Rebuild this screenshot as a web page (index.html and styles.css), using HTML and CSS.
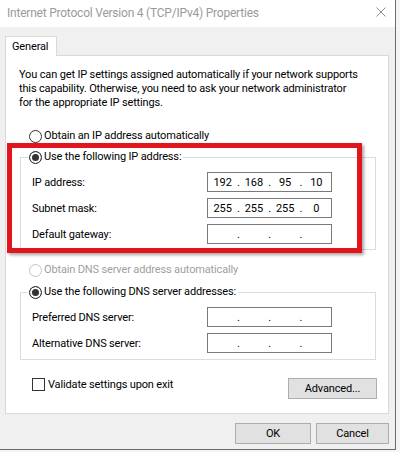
FILE: index.html
```html
<!DOCTYPE html>
<html>
<head>
<meta charset="utf-8">
<link rel="stylesheet" href="styles.css">
</head>
<body>
<div class="window">
  <div class="titlebar">
    <span class="title">Internet Protocol Version 4 (TCP/IPv4) Properties</span>
    <svg class="close" width="10" height="10" viewBox="0 0 10 10"><path d="M0.5 0.5L9.5 9.5M9.5 0.5L0.5 9.5" stroke="#8c8c8c" stroke-width="1" fill="none"/></svg>
  </div>
  <div class="client">
    <div class="tabs"><div class="tab">General</div></div>
    <div class="panel">
      <p class="intro">You can get IP settings assigned automatically if your network supports<br>this capability. Otherwise, you need to ask your network administrator<br>for the appropriate IP settings.</p>
      <div class="radio r-ipauto"><span class="rb"></span>Obtain an IP address automatically</div>
      <div class="group g-ip">
        <div class="legend"><span class="rb checked"></span>Use the following IP address:</div>
        <div class="rows">
          <div class="row"><span class="lbl">IP address:</span><div class="ipbox"><span class="seg">192</span><span class="dot">.</span><span class="seg">168</span><span class="dot">.</span><span class="seg">95</span><span class="dot">.</span><span class="seg">10</span></div></div>
          <div class="row"><span class="lbl">Subnet mask:</span><div class="ipbox"><span class="seg">255</span><span class="dot">.</span><span class="seg">255</span><span class="dot">.</span><span class="seg">255</span><span class="dot">.</span><span class="seg">0</span></div></div>
          <div class="row"><span class="lbl">Default gateway:</span><div class="ipbox"><span class="seg"></span><span class="dot">.</span><span class="seg"></span><span class="dot">.</span><span class="seg"></span><span class="dot">.</span><span class="seg"></span></div></div>
        </div>
      </div>
      <div class="radio disabled r-dnsauto"><span class="rb"></span>Obtain DNS server address automatically</div>
      <div class="group g-dns">
        <div class="legend"><span class="rb checked"></span>Use the following DNS server addresses:</div>
        <div class="rows">
          <div class="row"><span class="lbl">Preferred DNS server:</span><div class="ipbox"><span class="seg"></span><span class="dot">.</span><span class="seg"></span><span class="dot">.</span><span class="seg"></span><span class="dot">.</span><span class="seg"></span></div></div>
          <div class="row"><span class="lbl">Alternative DNS server:</span><div class="ipbox"><span class="seg"></span><span class="dot">.</span><span class="seg"></span><span class="dot">.</span><span class="seg"></span><span class="dot">.</span><span class="seg"></span></div></div>
        </div>
      </div>
      <div class="bottom-row">
        <div class="check"><span class="cb"></span>Validate settings upon exit</div>
        <div class="btn adv">Advanced...</div>
      </div>
    </div>
    <div class="actions">
      <div class="btn ok">OK</div>
      <div class="btn cancel">Cancel</div>
    </div>
  </div>
  <div class="highlight"></div>
</div>
</body>
</html>
```

FILE: styles.css
```css
* { box-sizing: border-box; }
html, body { margin: 0; padding: 0; }
body {
  background: #f4f4f4;
  width: 400px;
  height: 452px;
  overflow: hidden;
  font-family: Roboto, "Liberation Sans", sans-serif;
  font-size: 11px;
  letter-spacing: -0.15px;
  color: #000;
}
.window {
  position: relative;
  width: 396px;
  height: 450px;
  background: #f0f0f0;
  border-right: 1px solid #6d6d6d;
  border-bottom: 1px solid #6d6d6d;
}
.titlebar {
  height: 27px;
  background: #fff;
  display: flex;
  align-items: center;
  justify-content: space-between;
  padding: 0 9px 1px 7px;
}
.title {
  font-size: 12px;
  color: #9a9a9a;
  letter-spacing: -0.22px;
}
.close { display: block; margin-top: -2px; }
.client {
  padding: 9px 0 0 5px;
}
.tabs { display: flex; height: 19px; }
.tab {
  position: relative;
  z-index: 1;
  width: 52px;
  height: 20px;
  background: #fff;
  border: 1px solid #d9d9d9;
  border-bottom: none;
  padding: 2px 0 0 6px;
  line-height: 15px;
}
.panel {
  width: 384px;
  height: 359px;
  background: #fff;
  border: 1px solid #d9d9d9;
  display: flex;
  flex-direction: column;
}
.intro {
  margin: 0;
  padding: 12px 0 0 13px;
  line-height: 14px;
  white-space: nowrap;
}
.radio, .legend {
  display: flex;
  align-items: center;
  height: 16px;
  line-height: 16px;
  white-space: nowrap;
}
.r-ipauto { margin: 18px 0 0 23px; }
.r-dnsauto { margin: 12px 0 0 23px; }
.disabled { color: #a0a0a0; }
.rb {
  width: 13px;
  height: 13px;
  border-radius: 50%;
  border: 1px solid #333;
  background: #fff;
  margin-right: 2px;
  flex: none;
}
.disabled .rb { border-color: #c4c4c4; }
.rb.checked {
  background: #333;
  box-shadow: inset 0 0 0 2px #fff;
}
.group {
  margin-left: 14px;
  width: 356px;
  border: 1px solid #dcdcdc;
}
.g-ip { margin-top: 13px; padding-bottom: 5px; }
.g-dns { margin-top: 14px; padding-bottom: 6px; }
.legend {
  margin: -9px 0 0 7px;
  background: #fff;
  width: fit-content;
  padding: 0 2px 0 1px;
}
.rows {
  margin-top: 7px;
  display: flex;
  flex-direction: column;
  gap: 6px;
  padding-left: 11px;
}
.row {
  display: flex;
  align-items: center;
  height: 20px;
}
.lbl { width: 175px; flex: none; }
.ipbox {
  width: 125px;
  height: 20px;
  border: 1px solid #7a7a7a;
  display: flex;
  align-items: center;
  background: #fff;
}
.seg { flex: 1; text-align: center; }
.dot { width: 2px; display: flex; justify-content: center; }
.bottom-row {
  margin-top: 18px;
  display: flex;
  justify-content: space-between;
  align-items: flex-start;
  padding: 0 11px 0 26px;
}
.check {
  display: flex;
  align-items: center;
  height: 13px;
  line-height: 13px;
}
.cb {
  width: 13px;
  height: 13px;
  border: 1px solid #333;
  background: #fff;
  margin-right: 3px;
}
.btn {
  height: 21px;
  background: #e1e1e1;
  border: 1px solid #adadad;
  display: flex;
  align-items: center;
  justify-content: center;
}
.adv { width: 89px; }
.actions {
  width: 384px;
  margin-top: 9px;
  display: flex;
  justify-content: flex-end;
  gap: 5px;
}
.ok { width: 76px; }
.cancel { width: 73px; }
.highlight {
  position: absolute;
  left: 7px;
  top: 143px;
  width: 355px;
  height: 110px;
  border: 5px solid #e2141c;
  box-shadow: 2px 2px 3px rgba(0,0,0,0.35);
  pointer-events: none;
}
```
